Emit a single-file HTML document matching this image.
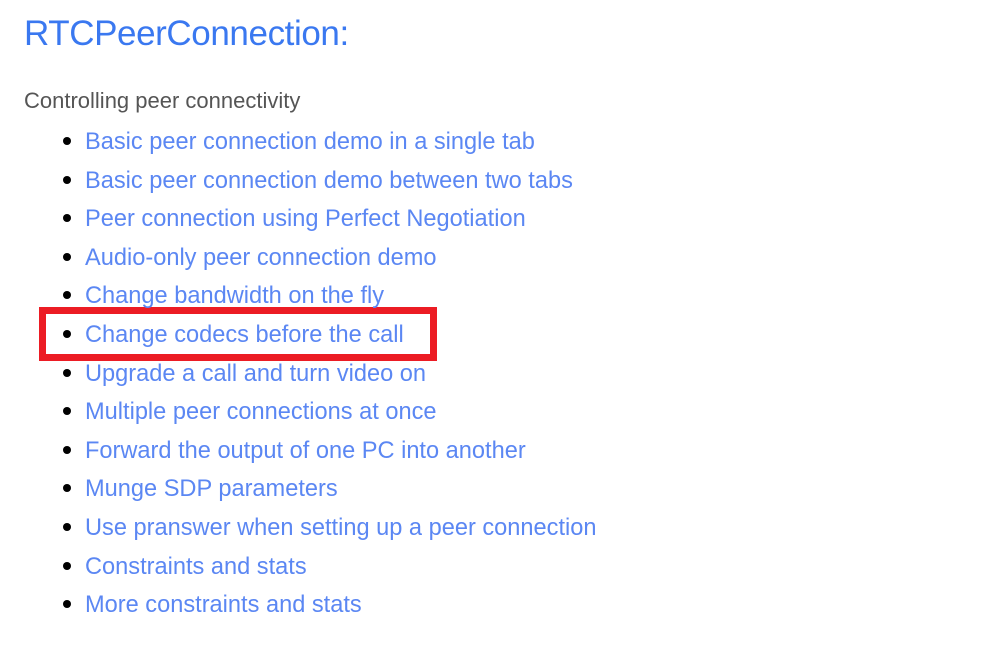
<!DOCTYPE html>
<html><head><meta charset="utf-8"><style>
html,body{margin:0;padding:0;background:#fff;width:1003px;height:652px;overflow:hidden;font-family:"Liberation Sans",Arial,sans-serif;}
.t{position:absolute;left:24px;top:12px;font-size:35px;color:#3a78f0;line-height:44px;letter-spacing:-0.4px;}
.s{position:absolute;left:24px;top:88px;font-size:22px;color:#555;line-height:26px;}
.i{position:absolute;left:85px;font-size:23.6px;color:#5b87f3;line-height:26px;letter-spacing:0;white-space:nowrap;}
.d{position:absolute;left:63px;width:8px;height:8px;border-radius:50%;background:#000;}
.box{position:absolute;left:39px;top:307px;width:384px;height:40px;border:7px solid #ec1c24;}
</style></head><body>
<div class="t">RTCPeerConnection:</div>
<div class="s">Controlling peer connectivity</div>
<div class="box"></div>
<div class="d" style="top:137px"></div><div class="i" style="top:129px">Basic peer connection demo in a single tab</div>
<div class="d" style="top:176px"></div><div class="i" style="top:168px">Basic peer connection demo between two tabs</div>
<div class="d" style="top:214px"></div><div class="i" style="top:206px">Peer connection using Perfect Negotiation</div>
<div class="d" style="top:253px"></div><div class="i" style="top:245px">Audio-only peer connection demo</div>
<div class="d" style="top:291px"></div><div class="i" style="top:283px">Change bandwidth on the fly</div>
<div class="d" style="top:330px"></div><div class="i" style="top:322px">Change codecs before the call</div>
<div class="d" style="top:369px"></div><div class="i" style="top:361px">Upgrade a call and turn video on</div>
<div class="d" style="top:407px"></div><div class="i" style="top:399px">Multiple peer connections at once</div>
<div class="d" style="top:446px"></div><div class="i" style="top:438px">Forward the output of one PC into another</div>
<div class="d" style="top:484px"></div><div class="i" style="top:476px">Munge SDP parameters</div>
<div class="d" style="top:523px"></div><div class="i" style="top:515px">Use pranswer when setting up a peer connection</div>
<div class="d" style="top:562px"></div><div class="i" style="top:554px">Constraints and stats</div>
<div class="d" style="top:600px"></div><div class="i" style="top:592px">More constraints and stats</div>
</body></html>
